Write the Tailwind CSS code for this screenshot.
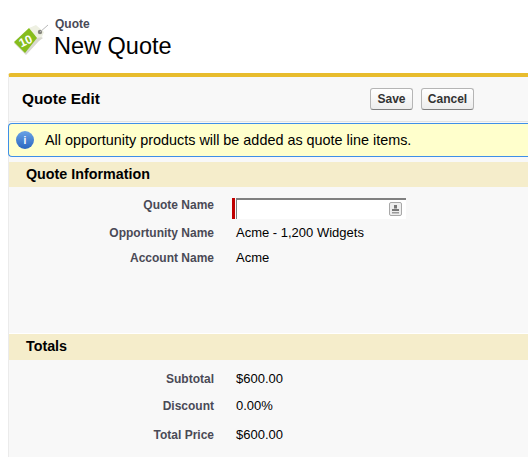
<!DOCTYPE html>
<html lang="en">
<head>
    <meta charset="UTF-8">
    <title>New Quote</title>
    <script src="https://cdn.jsdelivr.net/npm/@tailwindcss/browser@4"></script>
</head>
<body class="bg-white text-black h-[457px] w-[528px] overflow-hidden font-['Liberation_Sans',Arial,sans-serif]">

    <!-- page title -->
    <header class="flex h-[73px] pl-[14px] pt-[17px] gap-[5px]">
        <svg class="w-[35px] h-[38px] mt-[6px]" viewBox="0 0 35 38">
            <path d="M0 20 L12 32 L25 18 L29 15 L15 7 Z" fill="#d8d8d0"/>
            <path d="M15 5 L22 2 L30 9 L28 14 L23 15 Z" fill="#eef0e2"/>
            <path d="M0 19 L15 5 L23 15 L11 30 Z" fill="#86bd1c"/>
            <circle cx="26" cy="9" r="2.2" fill="#85857c"/>
            <path d="M26 9 L34 2" stroke="#b8b8b8" stroke-width="1" fill="none"/>
            <text x="11.5" y="22" text-anchor="middle" font-size="12" font-weight="700" fill="#fff" transform="rotate(-25 11.5 18)" font-family="Liberation Sans">10</text>
        </svg>
        <div class="flex flex-col">
            <div class="text-[12px] leading-[14px] font-bold text-[#4a4a56] ml-[1px]">Quote</div>
            <h1 class="text-[23.5px] leading-[28px] text-black mt-[1px]">New Quote</h1>
        </div>
    </header>

    <main class="ml-[8px] h-[384px] bg-[#f8f8f8] border-t-[4px] border-l border-t-[#e8bc2d] border-l-[#ebebeb] rounded-tl-[3px]">
        <!-- edit bar -->
        <div class="flex items-center h-[45px] pl-[13px] border-b border-[#e2e2e2]">
            <h2 class="w-[348px] text-[15.4px] font-bold">Quote Edit</h2>
            <div class="flex gap-[8px]">
                <button class="h-[22px] w-[43px] text-[12px] font-bold text-[#333] rounded-[3px] border border-[#b5b5b5] border-b-[#7f7f7f] bg-gradient-to-b from-white to-[#ededed]">Save</button>
                <button class="h-[22px] w-[53px] text-[12px] font-bold text-[#333] rounded-[3px] border border-[#b5b5b5] border-b-[#7f7f7f] bg-gradient-to-b from-white to-[#ededed]">Cancel</button>
            </div>
        </div>

        <!-- info message -->
        <div class="flex items-center h-[34px] -ml-[1px] mt-[1px] bg-[#ffffcc] border border-r-0 border-[#3f8fe8] rounded-l-[4px] pl-[7px] gap-[11px]">
            <div class="w-[18px] h-[18px] rounded-full bg-gradient-to-b from-[#6aa3e6] to-[#2a66c0] text-white text-[10px] font-bold flex items-center justify-center">i</div>
            <p class="text-[14.4px] text-black pt-[1px]">All opportunity products will be added as quote line items.</p>
        </div>

        <!-- quote information -->
        <section class="mt-[5px] h-[171px]">
            <h3 class="bg-[#f5edcb] h-[25px] pl-[17px] flex items-center text-[14.3px] font-bold">Quote Information</h3>
            <div class="flex items-center h-[22px] mt-[10px]">
                <label class="w-[205px] text-right text-[12px] font-bold text-[#4a4a56] -mt-[7px]">Quote Name</label>
                <div class="ml-[18px] w-[3px] h-[21px] bg-[#c00000]"></div>
                <div class="ml-[1px] w-[170px] h-[21px] bg-white border-t-2 border-l border-[#808080] flex items-center justify-end pr-[4px]">
                    <svg class="w-[13px] h-[14px]" viewBox="0 0 13 14">
                        <rect x="0.5" y="0.5" width="12" height="13" rx="1.5" fill="#eeeeee" stroke="#a8a8a8"/>
                        <rect x="5" y="3" width="3" height="3.5" fill="#777"/>
                        <rect x="3" y="7" width="7" height="2" fill="#777"/>
                        <rect x="3" y="10" width="7" height="1.5" fill="#999"/>
                    </svg>
                </div>
            </div>
            <div class="flex items-center h-[24px] mt-[2px]">
                <label class="w-[205px] text-right text-[12px] font-bold text-[#4a4a56]">Opportunity Name</label>
                <span class="ml-[22px] text-[13px]">Acme - 1,200 Widgets</span>
            </div>
            <div class="flex items-center h-[25px]">
                <label class="w-[205px] text-right text-[12px] font-bold text-[#4a4a56]">Account Name</label>
                <span class="ml-[22px] text-[13px]">Acme</span>
            </div>
        </section>

        <!-- totals -->
        <section class="border-t border-white">
            <h3 class="bg-[#f5edcb] h-[26px] pl-[17px] flex items-center text-[14.3px] font-bold">Totals</h3>
            <div class="flex items-center h-[27px] mt-[5px]">
                <label class="w-[205px] text-right text-[12px] font-bold text-[#4a4a56]">Subtotal</label>
                <span class="ml-[22px] text-[13px]">$600.00</span>
            </div>
            <div class="flex items-center h-[28px]">
                <label class="w-[205px] text-right text-[12px] font-bold text-[#4a4a56]">Discount</label>
                <span class="ml-[22px] text-[13px]">0.00%</span>
            </div>
            <div class="flex items-center h-[30px]">
                <label class="w-[205px] text-right text-[12px] font-bold text-[#4a4a56]">Total Price</label>
                <span class="ml-[22px] text-[13px]">$600.00</span>
            </div>
        </section>
    </main>
</body>
</html>
